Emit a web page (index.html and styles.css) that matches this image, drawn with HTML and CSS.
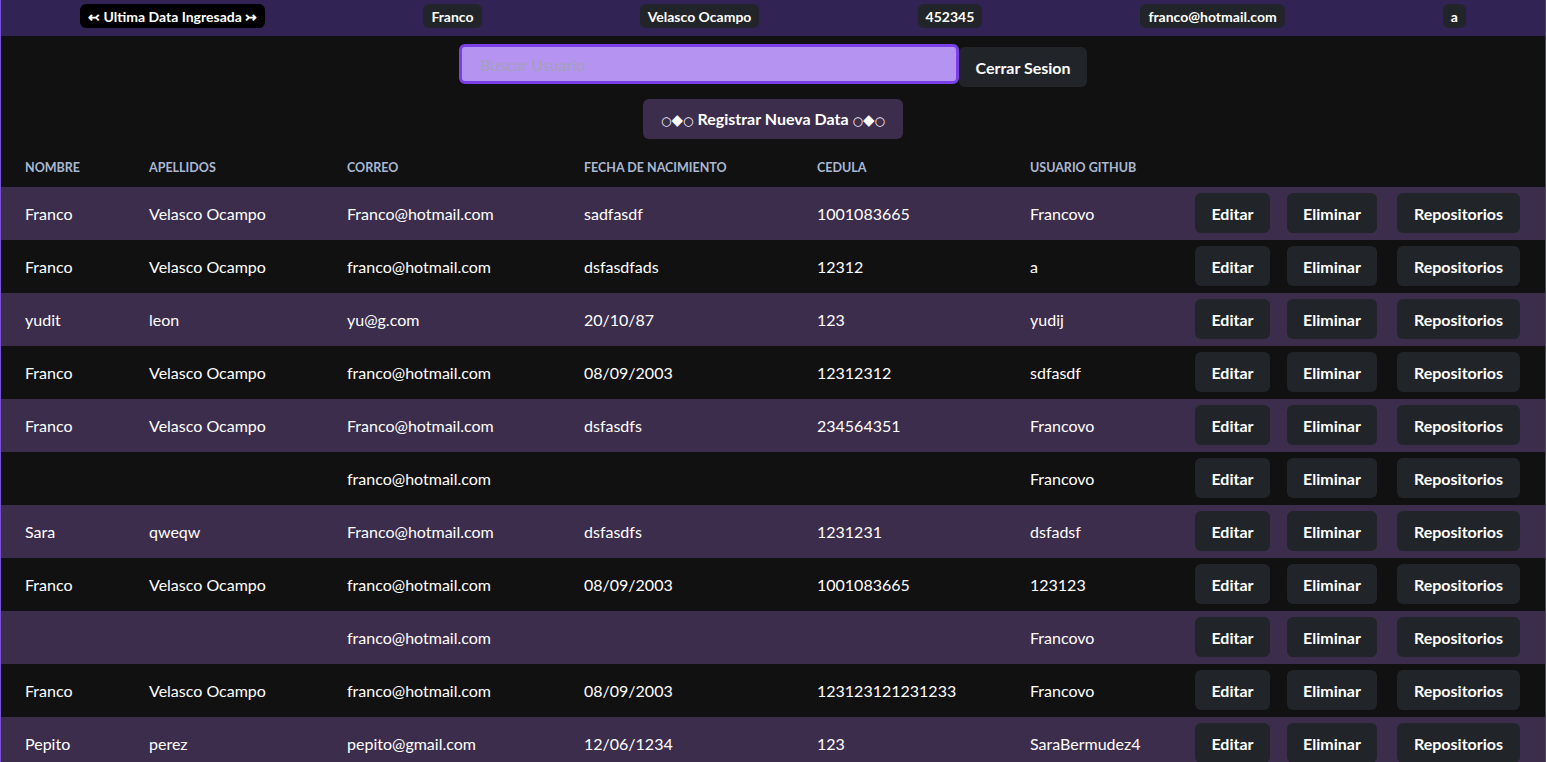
FILE: index.html
```html
<!DOCTYPE html>
<html lang="es">
<head>
<meta charset="utf-8">
<title>Usuarios</title>
<link rel="stylesheet" href="styles.css">
</head>
<body>
<div class="page">
  <header class="topbar">
    <span class="badge badge-black">↢ Ultima Data Ingresada ↣</span>
    <span class="badge">Franco</span>
    <span class="badge">Velasco Ocampo</span>
    <span class="badge">452345</span>
    <span class="badge">franco@hotmail.com</span>
    <span class="badge">a</span>
  </header>

  <div class="search-row">
    <input class="search" type="text" placeholder="Buscar Usuario">
    <button class="btn btn-logout">Cerrar Sesion</button>
  </div>

  <div class="register-row">
    <button class="btn btn-register"><span class="sym">○<span class="dia">◆</span>○</span> Registrar Nueva Data <span class="sym">○<span class="dia">◆</span>○</span></button>
  </div>

  <table class="users">
    <colgroup>
      <col class="c1"><col class="c2"><col class="c3"><col class="c4"><col class="c5"><col class="c6"><col class="c7">
    </colgroup>
    <thead>
      <tr>
        <th>Nombre</th><th>Apellidos</th><th>Correo</th><th>Fecha de nacimiento</th><th>Cedula</th><th>Usuario github</th><th></th>
      </tr>
    </thead>
    <tbody>
      <tr class="alt"><td>Franco</td><td>Velasco Ocampo</td><td>Franco@hotmail.com</td><td>sadfasdf</td><td>1001083665</td><td>Francovo</td><td><div class="actions"><button class="btn edit">Editar</button><button class="btn del">Eliminar</button><button class="btn repo">Repositorios</button></div></td></tr>
      <tr><td>Franco</td><td>Velasco Ocampo</td><td>franco@hotmail.com</td><td>dsfasdfads</td><td>12312</td><td>a</td><td><div class="actions"><button class="btn edit">Editar</button><button class="btn del">Eliminar</button><button class="btn repo">Repositorios</button></div></td></tr>
      <tr class="alt"><td>yudit</td><td>leon</td><td>yu@g.com</td><td>20/10/87</td><td>123</td><td>yudij</td><td><div class="actions"><button class="btn edit">Editar</button><button class="btn del">Eliminar</button><button class="btn repo">Repositorios</button></div></td></tr>
      <tr><td>Franco</td><td>Velasco Ocampo</td><td>franco@hotmail.com</td><td>08/09/2003</td><td>12312312</td><td>sdfasdf</td><td><div class="actions"><button class="btn edit">Editar</button><button class="btn del">Eliminar</button><button class="btn repo">Repositorios</button></div></td></tr>
      <tr class="alt"><td>Franco</td><td>Velasco Ocampo</td><td>Franco@hotmail.com</td><td>dsfasdfs</td><td>234564351</td><td>Francovo</td><td><div class="actions"><button class="btn edit">Editar</button><button class="btn del">Eliminar</button><button class="btn repo">Repositorios</button></div></td></tr>
      <tr><td></td><td></td><td>franco@hotmail.com</td><td></td><td></td><td>Francovo</td><td><div class="actions"><button class="btn edit">Editar</button><button class="btn del">Eliminar</button><button class="btn repo">Repositorios</button></div></td></tr>
      <tr class="alt"><td>Sara</td><td>qweqw</td><td>Franco@hotmail.com</td><td>dsfasdfs</td><td>1231231</td><td>dsfadsf</td><td><div class="actions"><button class="btn edit">Editar</button><button class="btn del">Eliminar</button><button class="btn repo">Repositorios</button></div></td></tr>
      <tr><td>Franco</td><td>Velasco Ocampo</td><td>franco@hotmail.com</td><td>08/09/2003</td><td>1001083665</td><td>123123</td><td><div class="actions"><button class="btn edit">Editar</button><button class="btn del">Eliminar</button><button class="btn repo">Repositorios</button></div></td></tr>
      <tr class="alt"><td></td><td></td><td>franco@hotmail.com</td><td></td><td></td><td>Francovo</td><td><div class="actions"><button class="btn edit">Editar</button><button class="btn del">Eliminar</button><button class="btn repo">Repositorios</button></div></td></tr>
      <tr><td>Franco</td><td>Velasco Ocampo</td><td>franco@hotmail.com</td><td>08/09/2003</td><td>123123121231233</td><td>Francovo</td><td><div class="actions"><button class="btn edit">Editar</button><button class="btn del">Eliminar</button><button class="btn repo">Repositorios</button></div></td></tr>
      <tr class="alt"><td>Pepito</td><td>perez</td><td>pepito@gmail.com</td><td>12/06/1234</td><td>123</td><td>SaraBermudez4</td><td><div class="actions"><button class="btn edit">Editar</button><button class="btn del">Eliminar</button><button class="btn repo">Repositorios</button></div></td></tr>
    </tbody>
  </table>
</div>
</body>
</html>
```

FILE: styles.css
```css
html {
  overflow: hidden;
}

body {
  margin: 0;
  background: #111111;
  color: #ffffff;
  font-family: Lato, "Noto Sans", "Liberation Sans", sans-serif;
  font-size: 16px;
}

.page {
  border-left: 1px solid #7a4fd8;
  border-right: 1px solid #4a4a55;
  min-height: 762px;
}

.topbar {
  box-sizing: border-box;
  height: 36px;
  padding-top: 4px;
  background: #312454;
  display: flex;
  justify-content: space-around;
  align-items: flex-start;
}

.badge {
  display: inline-flex;
  align-items: center;
  height: 24px;
  padding: 0 8px;
  border-radius: 6px;
  background: #212529;
  color: #ffffff;
  font-size: 14px;
  font-weight: 700;
  white-space: nowrap;
}

.badge-black {
  background: #000000;
}

.search-row {
  display: flex;
  justify-content: center;
  align-items: flex-start;
  padding-top: 8px;
}

.search {
  box-sizing: border-box;
  width: 500px;
  height: 40px;
  margin: 0;
  padding: 0 18px;
  background: #b594f1;
  border: 3px solid #7a3fe6;
  border-radius: 6px;
  font-family: inherit;
  font-size: 16px;
  color: #222;
  outline: none;
}

.search::placeholder {
  color: #a3a0b8;
}

.btn {
  box-sizing: border-box;
  height: 40px;
  padding: 0;
  border: 0;
  border-radius: 6px;
  background: #212529;
  color: #ffffff;
  font-family: inherit;
  font-size: 16px;
  font-weight: 700;
  text-align: center;
  white-space: nowrap;
  cursor: pointer;
}

.btn-logout {
  width: 128px;
  margin-top: 3px;
}

.register-row {
  display: flex;
  justify-content: center;
  padding-top: 12px;
}

.btn-register {
  width: 260px;
  background: #3c2d4c;
}

.sym {
  font-family: "DejaVu Sans", sans-serif;
  font-weight: 400;
  font-size: 12px;
}

.dia {
  font-size: 15px;
}

.users {
  width: 100%;
  margin-top: 8px;
  border-collapse: collapse;
  table-layout: fixed;
}

.c1 { width: 124px; }
.c2 { width: 198px; }
.c3 { width: 237px; }
.c4 { width: 233px; }
.c5 { width: 213px; }
.c6 { width: 165px; }

.users th {
  height: 40px;
  padding: 0 0 0 24px;
  text-align: left;
  font-size: 12.5px;
  font-weight: 700;
  text-transform: uppercase;
  color: #aab8d2;
}

.users td {
  height: 53px;
  padding: 0 0 0 24px;
  font-size: 16px;
  white-space: nowrap;
}

.users tr.alt td {
  background: #3c2d4c;
}

.actions {
  display: flex;
  gap: 17px;
  align-items: center;
  margin-top: -1px;
}

.edit { width: 75px; }
.del { width: 90px; }
.repo {
  width: 123px;
  margin-left: 3px;
}
```
